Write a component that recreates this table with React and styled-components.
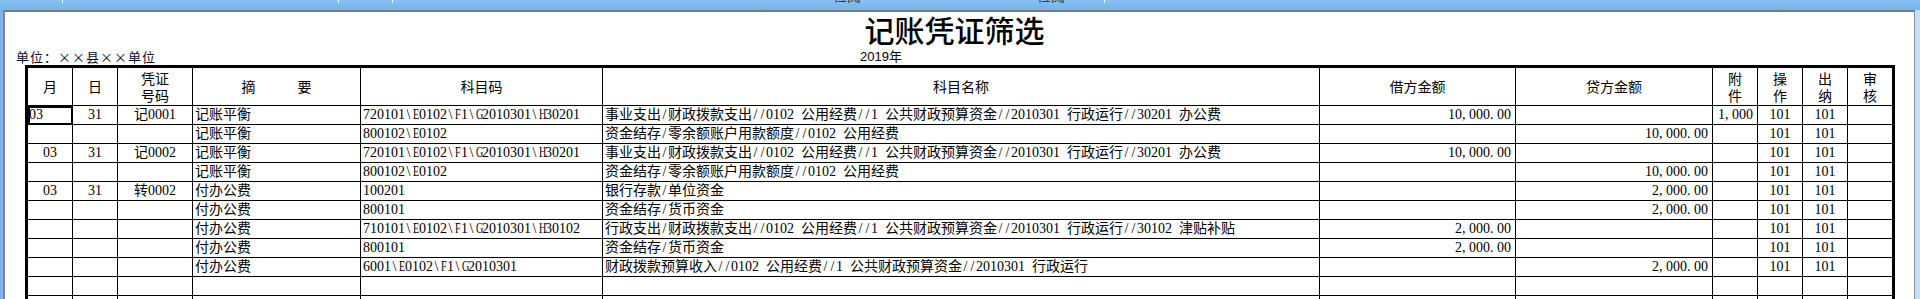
import React from 'react'
import styled, { createGlobalStyle } from 'styled-components'

const GlobalStyle = createGlobalStyle`
  html, body {
    margin: 0;
    padding: 0;
    background: #79b7ec;
  }
  body {
    width: 1920px;
    height: 299px;
    overflow: hidden;
    font-family: "Noto Sans CJK SC", sans-serif;
  }
`

const Window = styled.div`
  width: 1920px;
  height: 299px;
  display: flex;
  flex-direction: column;
  background: #79b7ec;
  overflow: hidden;
`

const TopBar = styled.div`
  flex: none;
  height: 10px;
  display: flex;
  overflow: hidden;
  background: linear-gradient(#86c1f1, #74b4eb);
`

const Tab = styled.div`
  position: relative;
  flex: ${p => (p.$width ? `0 0 ${p.$width}px` : '1')};
  display: flex;
  align-items: flex-start;
  gap: ${p => p.$gap || 0}px;
  padding-left: ${p => p.$pad || 0}px;
  box-sizing: border-box;
  &::before {
    content: '';
    display: ${p => (p.$tick ? 'block' : 'none')};
    position: absolute;
    left: 0;
    top: 0;
    width: 1px;
    height: 3px;
    background: #fff;
  }
`

const TabLabel = styled.span`
  margin-top: -12px;
  font: 14px/14px "Noto Sans CJK SC", sans-serif;
  color: #3a3a3a;
  white-space: nowrap;
`

const Frame = styled.div`
  flex: 1;
  display: flex;
  min-height: 0;
`

const Pane = styled.div`
  flex: 1;
  margin-left: 3px;
  background: #fff;
  border-top: 2px solid #7b7b7b;
  border-left: 2px solid #858585;
  border-right: 1px solid #8d8d8d;
`

const SideStrip = styled.div`
  flex: none;
  width: 5px;
  background: #c4def4;
`

const Title = styled.h1`
  margin: 2px 0 0;
  padding-right: 10px;
  font: 500 30px/30px "Noto Sans CJK SC", sans-serif;
  text-align: center;
  color: #000;
`

const MetaRow = styled.div`
  display: grid;
  grid-template-columns: 855px auto;
  height: 21px;
  padding-top: 5px;
  box-sizing: border-box;
`

const Unit = styled.span`
  padding-left: 11px;
  font: 13px/16px "Noto Sans CJK SC", sans-serif;
  letter-spacing: 1px;
  font-feature-settings: "fwid";
  color: #0c0c24;
  white-space: nowrap;
`

const Year = styled.span`
  font: 13px/16px "Liberation Sans", "Noto Sans CJK SC", sans-serif;
  color: #000;
`

const Sheet = styled.div`
  margin-left: 20px;
  width: 1870px;
  box-sizing: border-box;
  border: 3px solid #000;
  border-bottom: none;
  display: grid;
  grid-template-columns: 45px 45px 75px 168px 242px 717px 196px 197px 45px 45px 45px 44px;
  grid-template-rows: 38px;
  grid-auto-rows: 19px;
  font: 14px/18px "Liberation Serif", "Noto Sans CJK SC", serif;
  color: #000;
`

const HeadCell = styled.div`
  box-sizing: border-box;
  border-right: ${p => (p.$last ? 'none' : '1px solid #000')};
  border-bottom: 1px solid #000;
  display: flex;
  align-items: center;
  justify-content: center;
  text-align: center;
  font: 14px/17px "Noto Sans CJK SC", sans-serif;
  white-space: pre-line;
`

const Cell = styled.div`
  box-sizing: border-box;
  border-right: ${p => (p.$last ? 'none' : '1px solid #000')};
  border-bottom: 1px solid #000;
  padding-left: ${p => (p.$focus ? '1px' : p.$align === 'left' ? '2px' : '0')};
  padding-right: ${p => (p.$align === 'right' ? '4px' : '0')};
  text-align: ${p => (p.$focus ? 'left' : p.$align)};
  white-space: pre;
  overflow: hidden;
  outline: ${p => (p.$focus ? '2px solid #000' : 'none')};
  outline-offset: -2px;
`

// half-width cell, the way the old Song-style grid font spaces ASCII
const Half = styled.span`
  display: inline-block;
  width: 7px;
  text-align: ${p => (p.$lead ? 'left' : 'center')};
  transform: ${p => (p.$squeeze ? 'scaleX(0.72)' : 'none')};
`

const Caret = styled.span`
  display: inline-block;
  width: 1px;
  height: 14px;
  margin-right: -1px;
  vertical-align: -2px;
  background: #000;
`

const halfWidth = text => {
  const out = []
  let run = ''
  for (const ch of text) {
    if (ch < '\u0080' && !(ch >= '0' && ch <= '9')) {
      if (run) out.push(run)
      run = ''
      out.push(
        <Half key={out.length} $lead={ch === ',' || ch === '.'} $squeeze={/[A-Za-z]/.test(ch)}>
          {ch}
        </Half>
      )
    } else {
      run += ch
    }
  }
  if (run) out.push(run)
  return out
}

const heads = ['月', '日', '凭证\n号码', '摘\u3000\u3000\u3000要', '科目码', '科目名称', '借方金额', '贷方金额', '附\n件', '操\n作', '出\n纳', '审\n核']

const aligns = ['center', 'center', 'center', 'left', 'left', 'left', 'right', 'right', 'right', 'center', 'center', 'center']

const rows = [
  ['03', '31', '记0001', '记账平衡', '720101\\E0102\\F1\\G2010301\\H30201', '事业支出/财政拨款支出//0102 公用经费//1 公共财政预算资金//2010301 行政运行//30201 办公费', '10,000.00', '', '1,000', '101', '101', ''],
  ['', '', '', '记账平衡', '800102\\E0102', '资金结存/零余额账户用款额度//0102 公用经费', '', '10,000.00', '', '101', '101', ''],
  ['03', '31', '记0002', '记账平衡', '720101\\E0102\\F1\\G2010301\\H30201', '事业支出/财政拨款支出//0102 公用经费//1 公共财政预算资金//2010301 行政运行//30201 办公费', '10,000.00', '', '', '101', '101', ''],
  ['', '', '', '记账平衡', '800102\\E0102', '资金结存/零余额账户用款额度//0102 公用经费', '', '10,000.00', '', '101', '101', ''],
  ['03', '31', '转0002', '付办公费', '100201', '银行存款/单位资金', '', '2,000.00', '', '101', '101', ''],
  ['', '', '', '付办公费', '800101', '资金结存/货币资金', '', '2,000.00', '', '101', '101', ''],
  ['', '', '', '付办公费', '710101\\E0102\\F1\\G2010301\\H30102', '行政支出/财政拨款支出//0102 公用经费//1 公共财政预算资金//2010301 行政运行//30102 津贴补贴', '2,000.00', '', '', '101', '101', ''],
  ['', '', '', '付办公费', '800101', '资金结存/货币资金', '2,000.00', '', '', '101', '101', ''],
  ['', '', '', '付办公费', '6001\\E0102\\F1\\G2010301', '财政拨款预算收入//0102 公用经费//1 公共财政预算资金//2010301 行政运行', '', '2,000.00', '', '101', '101', ''],
  ['', '', '', '', '', '', '', '', '', '', '', ''],
  ['', '', '', '', '', '', '', '', '', '', '', ''],
]

const App = () => {
  return (
    <Window>
      <GlobalStyle />
      <TopBar>
        <Tab $width={62} />
        <Tab $width={276} $tick />
        <Tab $width={54} $tick />
        <Tab $width={712} $tick $pad={441} $gap={176}>
          <TabLabel>检阅</TabLabel>
          <TabLabel>检阅</TabLabel>
        </Tab>
        <Tab $tick />
      </TopBar>
      <Frame>
        <Pane>
          <Title>记账凭证筛选</Title>
          <MetaRow>
            <Unit>单位：××县××单位</Unit>
            <Year>2019年</Year>
          </MetaRow>
          <Sheet>
            {heads.map((h, i) => (
              <HeadCell key={'h' + i} $last={i === 11}>{h}</HeadCell>
            ))}
            {rows.map((row, r) =>
              row.map((v, c) => {
                const focus = r === 0 && c === 0
                return (
                  <Cell key={r + '-' + c} $align={aligns[c]} $last={c === 11} $focus={focus}>
                    {focus && <Caret />}
                    {halfWidth(v)}
                  </Cell>
                )
              })
            )}
          </Sheet>
        </Pane>
        <SideStrip />
      </Frame>
    </Window>
  )
}

export default App
